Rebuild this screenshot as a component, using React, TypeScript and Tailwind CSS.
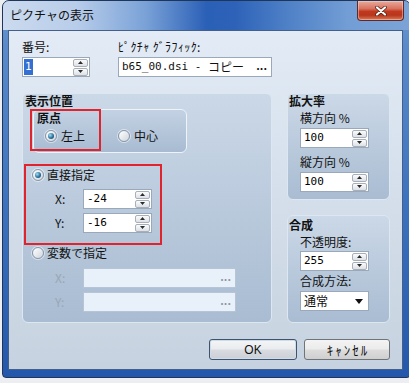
import React from "react";

const jp = "font-['Noto_Sans_CJK_JP','Noto_Sans',sans-serif]";
const mono = "font-['DejaVu_Sans_Mono','Noto_Sans_CJK_JP',monospace]";

function Tri({ up }: { up?: boolean }) {
  return (
    <svg width="5" height="3" viewBox="0 0 5 3">
      <path d={up ? "M0 3 L2.5 0 L5 3Z" : "M0 0 L5 0 L2.5 3Z"} fill="#2b2b2b" />
    </svg>
  );
}

function Spin() {
  return (
    <div className="flex flex-col gap-[1px] mr-[1px] shrink-0">
      <div className="w-[15px] h-[8px] border border-[#a7afba] rounded-[2px] bg-[linear-gradient(180deg,#fbfbfb,#dde1e6)] flex items-center justify-center">
        <Tri up />
      </div>
      <div className="w-[15px] h-[8px] border border-[#a7afba] rounded-[2px] bg-[linear-gradient(180deg,#fbfbfb,#dde1e6)] flex items-center justify-center">
        <Tri />
      </div>
    </div>
  );
}

function SpinField({ value }: { value: React.ReactNode }) {
  return (
    <div className="w-[69px] h-[20px] border border-[#9ba8b9] bg-white flex items-center">
      <div className={`flex-1 pl-[3px] text-[11px] leading-[18px] text-black ${mono}`}>{value}</div>
      <Spin />
    </div>
  );
}

function Radio({ on }: { on?: boolean }) {
  return (
    <div className="w-[12px] h-[12px] rounded-full border border-[#8796a8] bg-[linear-gradient(135deg,#ffffff,#cfd6de)] shadow-[0_0_0_1px_rgba(255,255,255,0.5)] flex items-center justify-center shrink-0">
      {on && (
        <div className="w-[6px] h-[6px] rounded-full bg-[radial-gradient(circle_at_35%_35%,#a8dcf2,#2b74a0_55%,#0d3551)]" />
      )}
    </div>
  );
}

const groupCls =
  "rounded-[6px] border border-[#dde7f1] bg-[linear-gradient(180deg,#cbd8e7,#a9bcd2)]";

export default function App() {
  return (
    <div className={`w-[409px] h-[383px] bg-[#eceef1] overflow-hidden ${jp}`}>
      <div className="ml-[2px] w-[409px] h-[378px] rounded-t-[7px] rounded-b-[4px] border border-[#1f3658] bg-[linear-gradient(180deg,#6f9ad2_0%,#5a8aca_12%,#3c72bd_55%,#2357ab_100%)] flex flex-col">
        {/* title bar */}
        <div className="h-[29px] flex items-start rounded-t-[6px] bg-[linear-gradient(90deg,#cbdaee_0%,#b8cdea_18%,#7aa2d7_35%,#2b60b7_50%,#2d62b8_57%,#4f81c7_70%,#739ed5_85%,#7ba3d6_100%)]">
          <div className="pl-[7px] pt-[6px] text-[12px] leading-[16px] text-[#111]">ピクチャの表示</div>
          <div className="ml-auto mr-[6px] w-[47px] h-[20px] rounded-b-[4px] border border-t-0 border-[#5b2b2b] bg-[linear-gradient(180deg,#e9ab9c_0%,#d8735f_40%,#c0391f_55%,#b8361c_75%,#dc7a58_100%)] shadow-[inset_0_0_0_1px_rgba(255,220,210,0.45)] flex items-center justify-center">
            <svg width="12" height="10" viewBox="0 0 12 10">
              <path d="M2 1.5 L10 8.5 M10 1.5 L2 8.5" stroke="#4a1c14" strokeWidth="3.6" strokeLinecap="round" />
              <path d="M2 1.5 L10 8.5 M10 1.5 L2 8.5" stroke="#ffffff" strokeWidth="2.2" strokeLinecap="round" />
            </svg>
          </div>
        </div>

        {/* client area */}
        <div className="ml-[5px] w-[395px] h-[340px] border border-[#42608a] bg-[linear-gradient(180deg,#e2ebf6,#c6d2df)] flex flex-col pl-[13px] pt-[9px] text-[12px] text-[#111]">
          {/* top row */}
          <div className="flex">
            <div className="w-[68px] flex flex-col">
              <div className="h-[14px] leading-[14px]">番号:</div>
              <div className="mt-[3px] h-[20px] w-[68px] border border-[#9ba8b9] bg-white flex items-center">
                <div className="flex-1 pl-[1px] flex items-center">
                  <span className={`bg-[#3470d4] text-white text-[11px] leading-[16px] px-[1px] ${mono}`}>1</span>
                </div>
                <Spin />
              </div>
            </div>
            <div className="ml-[28px] w-[154px] flex flex-col">
              <div className="h-[14px] leading-[14px] text-[12px] tracking-[0.4px]">ﾋﾟｸﾁｬ ｸﾞﾗﾌｨｯｸ:</div>
              <div className="mt-[3px] h-[20px] w-[154px] border border-[#9ba8b9] bg-white flex items-center pl-[3px] pr-[4px]">
                <span className={`text-[11px] leading-[18px] whitespace-pre ${mono}`}>{"b65_00.dsi - "}</span>
                <span className="text-[12px] leading-[18px]">コピー</span>
                <span className="ml-auto text-[11px] font-bold leading-[10px] pb-[4px]">...</span>
              </div>
            </div>
          </div>

          {/* groups */}
          <div className="mt-[16px] flex gap-[15px]">
            {/* 表示位置 */}
            <div className={`relative w-[250px] h-[230px] flex flex-col pl-[2px] ${groupCls}`}>
              <div className="h-[14px] leading-[14px] font-bold">表示位置</div>
              <div className="relative mt-[1px] ml-[8px] w-[154px] h-[44px] rounded-[6px] border border-[#eef3f9] bg-[linear-gradient(180deg,#c3d2e3,#a8bbd1)] flex flex-col">
                <div className="pl-[3px] pt-[1px] h-[15px] leading-[14px] font-bold">原点</div>
                <div className="mt-[4px] flex items-center pl-[11px] h-[14px]">
                  <div className="w-[73px] flex items-center gap-[4px]">
                    <Radio on />
                    <span className="leading-[14px]">左上</span>
                  </div>
                  <div className="flex items-center gap-[4px]">
                    <Radio />
                    <span className="leading-[14px]">中心</span>
                  </div>
                </div>
                <div className="absolute left-[-4px] top-[-1px] w-[71px] h-[42px] border-2 border-[#e0232c]" />
              </div>

              <div className="mt-[15px] ml-[7px] h-[14px] flex items-center gap-[3px]">
                <Radio on />
                <span className="leading-[14px]">直接指定</span>
              </div>
              <div className="mt-[7px] ml-[30px] flex items-center">
                <span className="w-[28px] leading-[14px]">X:</span>
                <SpinField value="-24" />
              </div>
              <div className="mt-[4px] ml-[30px] flex items-center">
                <span className="w-[28px] leading-[14px]">Y:</span>
                <SpinField value="-16" />
              </div>

              <div className="mt-[13px] ml-[7px] h-[14px] flex items-center gap-[3px]">
                <Radio />
                <span className="leading-[14px]">変数で指定</span>
              </div>
              <div className="mt-[8px] ml-[30px] flex items-center">
                <span className="w-[28px] leading-[14px] text-[#9aa6b4]">X:</span>
                <div className="w-[153px] h-[20px] border border-[#b6c4d5] bg-[#e8f0f9] flex items-center justify-end pr-[4px]">
                  <span className="text-[11px] font-bold leading-[10px] pb-[4px] text-[#8d97a3]">...</span>
                </div>
              </div>
              <div className="mt-[4px] ml-[30px] flex items-center">
                <span className="w-[28px] leading-[14px] text-[#9aa6b4]">Y:</span>
                <div className="w-[153px] h-[20px] border border-[#b6c4d5] bg-[#e8f0f9] flex items-center justify-end pr-[4px]">
                  <span className="text-[11px] font-bold leading-[10px] pb-[4px] text-[#8d97a3]">...</span>
                </div>
              </div>

              <div className="absolute left-[1px] top-[70px] w-[138px] h-[81px] border-2 border-[#e0232c]" />
            </div>

            {/* right column */}
            <div className="w-[103px] flex flex-col gap-[15px]">
              <div className={`h-[107px] flex flex-col pl-[1px] ${groupCls}`}>
                <div className="h-[14px] leading-[14px] font-bold">拡大率</div>
                <div className="mt-[3px] ml-[11px] h-[14px] leading-[14px]">横方向 %</div>
                <div className="mt-[3px] ml-[11px]">
                  <SpinField value="100" />
                </div>
                <div className="mt-[7px] ml-[11px] h-[14px] leading-[14px]">縦方向 %</div>
                <div className="mt-[3px] ml-[11px]">
                  <SpinField value="100" />
                </div>
              </div>
              <div className={`h-[108px] flex flex-col pl-[1px] pt-[2px] ${groupCls}`}>
                <div className="h-[14px] leading-[14px] font-bold">合成</div>
                <div className="mt-[3px] ml-[11px] h-[14px] leading-[14px]">不透明度:</div>
                <div className="mt-[2px] ml-[11px]">
                  <SpinField value="255" />
                </div>
                <div className="mt-[3px] ml-[11px] h-[14px] leading-[14px]">合成方法:</div>
                <div className="mt-[3px] ml-[11px] w-[69px] h-[20px] border border-[#9ba8b9] bg-white flex items-center pl-[3px] pr-[5px]">
                  <span className="leading-[14px]">通常</span>
                  <svg className="ml-auto" width="8" height="5" viewBox="0 0 8 5">
                    <path d="M0 0 L8 0 L4 5Z" fill="#111" />
                  </svg>
                </div>
              </div>
            </div>
          </div>

          {/* buttons */}
          <div className="mt-[16px] flex">
            <div className="ml-[187px] w-[88px] h-[21px] rounded-[3px] border border-[#3d536f] bg-[linear-gradient(180deg,#f4f5f6_0%,#e9ebee_48%,#d8dce1_52%,#cbd0d6_100%)] shadow-[inset_0_0_0_1px_#cfdbe8] flex items-center justify-center text-[12px] leading-[14px] font-['Liberation_Sans',sans-serif]">
              OK
            </div>
            <div className="ml-[7px] w-[86px] h-[21px] rounded-[3px] border border-[#6f7479] bg-[linear-gradient(180deg,#f4f4f4_0%,#ebebeb_48%,#dddddd_52%,#cfcfcf_100%)] flex items-center justify-center text-[13px] leading-[14px] tracking-[2px] pl-[2px]">
              ｷｬﾝｾﾙ
            </div>
          </div>
        </div>
      </div>
    </div>
  );
}
